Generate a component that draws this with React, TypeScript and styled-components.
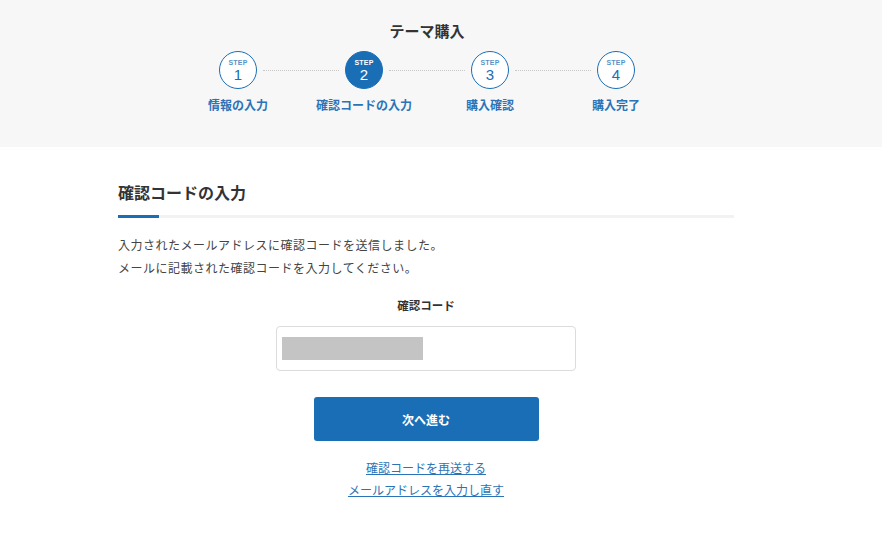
import React from "react";
import styled, { createGlobalStyle } from "styled-components";

const GlobalStyle = createGlobalStyle`
  body {
    margin: 0;
    background: #fff;
    font-family: "Noto Sans CJK JP", "Noto Sans", sans-serif;
    color: #333;
  }
`;

const BLUE = "#1a6eb6";

const Band = styled.header`
  background: #f7f7f7;
  height: 147px;
  padding: 19px 28px 0 0;
  box-sizing: border-box;
`;

const Title = styled.h1`
  margin: 0;
  text-align: center;
  font-size: 15px;
  font-weight: 700;
  color: #333;
  line-height: 24px;
`;

const Steps = styled.ol`
  list-style: none;
  margin: 8px auto 0;
  padding: 0;
  width: 504px;
  display: flex;
`;

const Step = styled.li`
  width: 126px;
  display: flex;
  flex-direction: column;
  align-items: center;
  position: relative;

  &:not(:last-child)::after {
    content: "";
    position: absolute;
    top: 19px;
    left: 88px;
    width: 76px;
    border-top: 1px dotted #c8c8c8;
  }
`;

const Circle = styled.div<{ $active?: boolean }>`
  width: 38px;
  height: 38px;
  border-radius: 50%;
  box-sizing: border-box;
  border: 1.5px solid ${BLUE};
  background: ${(p) => (p.$active ? BLUE : "#fff")};
  color: ${(p) => (p.$active ? "#fff" : BLUE)};
  display: flex;
  flex-direction: column;
  align-items: center;
  justify-content: center;
  font-family: "Liberation Sans", Arial, sans-serif;
`;

const StepWord = styled.span<{ $active?: boolean }>`
  font-size: 7px;
  font-weight: 700;
  line-height: 8px;
  letter-spacing: 0.2px;
  opacity: ${(p) => (p.$active ? 1 : 0.75)};
`;

const StepNum = styled.span`
  font-size: 15px;
  line-height: 15px;
`;

const StepLabel = styled.span`
  margin-top: 7px;
  font-size: 12px;
  font-weight: 700;
  color: #2b73b7;
  line-height: 18px;
`;

const Main = styled.main`
  padding: 32px 30px 40px 0;
`;

const Container = styled.div`
  width: 616px;
  margin: 0 auto;
`;

const Heading = styled.h2`
  margin: 0;
  font-size: 16px;
  font-weight: 700;
  color: #333;
  line-height: 26px;
  padding-bottom: 10px;
  position: relative;
  border-bottom: 3px solid #f2f2f2;

  &::after {
    content: "";
    position: absolute;
    left: 0;
    bottom: -3px;
    width: 41px;
    height: 3px;
    background: ${BLUE};
  }
`;

const Lead = styled.p`
  margin: 15px 0 0;
  font-size: 12px;
  line-height: 23px;
  letter-spacing: 0.5px;
  color: #444;
`;

const Form = styled.div`
  display: flex;
  flex-direction: column;
  align-items: center;
`;

const FieldLabel = styled.label`
  margin-top: 16px;
  font-size: 11.5px;
  font-weight: 700;
  color: #333;
  line-height: 20px;
`;

const InputBox = styled.div`
  margin-top: 11px;
  width: 300px;
  height: 45px;
  box-sizing: border-box;
  border: 1px solid #dcdcdc;
  border-radius: 4px;
  background: #fff;
  padding: 10px 5px;
`;

const Masked = styled.div`
  width: 141px;
  height: 23px;
  background: #c4c4c4;
`;

const NextButton = styled.button`
  margin-top: 26px;
  width: 225px;
  height: 44px;
  border: none;
  border-radius: 3px;
  background: ${BLUE};
  color: #fff;
  font-family: inherit;
  font-size: 12px;
  font-weight: 700;
  cursor: pointer;
`;

const Links = styled.div`
  margin-top: 16px;
  display: flex;
  flex-direction: column;
  align-items: center;
`;

const TextLink = styled.a`
  font-size: 12px;
  line-height: 22px;
  color: #2b73b7;
  text-decoration: underline;
  cursor: pointer;
`;

const steps = [
  { n: 1, label: "情報の入力" },
  { n: 2, label: "確認コードの入力", active: true },
  { n: 3, label: "購入確認" },
  { n: 4, label: "購入完了" },
];

const App: React.FC = () => {
  return (
    <>
      <GlobalStyle />
      <Band>
        <Title>テーマ購入</Title>
        <Steps>
          {steps.map((s) => (
            <Step key={s.n}>
              <Circle $active={s.active}>
                <StepWord $active={s.active}>STEP</StepWord>
                <StepNum>{s.n}</StepNum>
              </Circle>
              <StepLabel>{s.label}</StepLabel>
            </Step>
          ))}
        </Steps>
      </Band>

      <Main>
        <Container>
          <Heading>確認コードの入力</Heading>
          <Lead>
            入力されたメールアドレスに確認コードを送信しました。
            <br />
            メールに記載された確認コードを入力してください。
          </Lead>
          <Form>
            <FieldLabel>確認コード</FieldLabel>
            <InputBox>
              <Masked />
            </InputBox>
            <NextButton>次へ進む</NextButton>
            <Links>
              <TextLink>確認コードを再送する</TextLink>
              <TextLink>メールアドレスを入力し直す</TextLink>
            </Links>
          </Form>
        </Container>
      </Main>
    </>
  );
};

export default App;
